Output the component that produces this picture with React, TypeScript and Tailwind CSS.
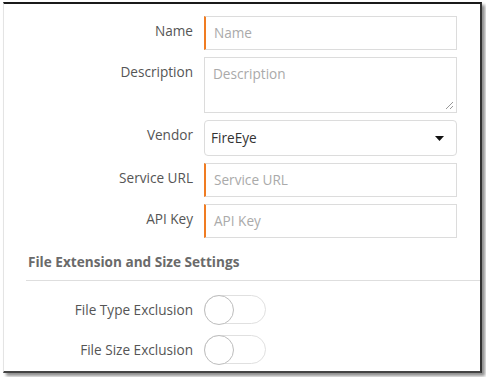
import React from "react";

const font = { fontFamily: '"Open Sans", "Noto Sans", sans-serif' };

function Label({ children }: { children: React.ReactNode }) {
  return (
    <div className="w-[189px] shrink-0 pt-[6px] text-right text-[13.6px] leading-[18px] text-[#555]">
      {children}
    </div>
  );
}

function TextInput({ placeholder }: { placeholder: string }) {
  return (
    <div className="flex h-[34px] w-[253px] items-center border border-l-2 border-[#dcdcdc] border-l-[#f07c22] pl-[8px] text-[13.6px] text-[#aaa]">
      {placeholder}
    </div>
  );
}

function Toggle() {
  return (
    <div className="relative h-[29px] w-[62px] rounded-full border border-[#e0e0e0] bg-white">
      <div className="absolute left-[-1px] top-[-1px] h-[30px] w-[30px] rounded-full border-[1.5px] border-[#bdbdbd] bg-white" />
    </div>
  );
}

export default function App() {
  return (
    <div className="h-[377px] w-[486px] bg-white" style={font}>
      <div className="ml-[3px] mt-[2px] h-[371px] w-[479px] border-t-2 border-r-2 border-b-2 border-l border-t-[#1a1a1a] border-r-[#333] border-b-[#444] border-l-[#e4e4e4] bg-white pt-[12px] shadow-[3px_3px_3px_rgba(0,0,0,0.45)]">
        <div className="flex flex-col gap-[7px]">
          <div className="flex gap-[11px]">
            <Label>Name</Label>
            <TextInput placeholder="Name" />
          </div>
          <div className="flex gap-[11px]">
            <Label>Description</Label>
            <div className="relative h-[56px] w-[253px] border border-[#dcdcdc] pl-[8px] pt-[7px] text-[13.6px] leading-[18px] text-[#aaa]">
              Description
              <svg className="absolute bottom-[2px] right-[2px]" width="9" height="9" viewBox="0 0 9 9">
                <line x1="8" y1="1" x2="1" y2="8" stroke="#999" strokeWidth="1" />
                <line x1="8" y1="5" x2="5" y2="8" stroke="#999" strokeWidth="1" />
              </svg>
            </div>
          </div>
          <div className="flex gap-[11px]">
            <Label>Vendor</Label>
            <div className="flex h-[36px] w-[253px] items-center justify-between rounded-[4px] border border-[#dcdcdc] pl-[6px] pr-[12px] text-[13.6px] text-[#333]">
              <span>FireEye</span>
              <svg width="9" height="5" viewBox="0 0 9 5">
                <polygon points="0,0 9,0 4.5,5" fill="#111" />
              </svg>
            </div>
          </div>
          <div className="flex gap-[11px]">
            <Label>Service URL</Label>
            <TextInput placeholder="Service URL" />
          </div>
          <div className="flex gap-[11px]">
            <Label>API Key</Label>
            <TextInput placeholder="API Key" />
          </div>
        </div>
        <div className="mt-[15px] pl-[24px] text-[13.6px] font-bold leading-[18px] text-[#6a6a6a]">
          File Extension and Size Settings
        </div>
        <div className="ml-[22px] mt-[9px] h-px bg-[#dedede]" />
        <div className="mt-[14px] flex flex-col gap-[11px]">
          <div className="flex items-center gap-[11px]">
            <div className="w-[189px] text-right text-[13.6px] leading-[18px] text-[#555]">File Type Exclusion</div>
            <Toggle />
          </div>
          <div className="flex items-center gap-[11px]">
            <div className="w-[189px] text-right text-[13.6px] leading-[18px] text-[#555]">File Size Exclusion</div>
            <Toggle />
          </div>
        </div>
      </div>
    </div>
  );
}
